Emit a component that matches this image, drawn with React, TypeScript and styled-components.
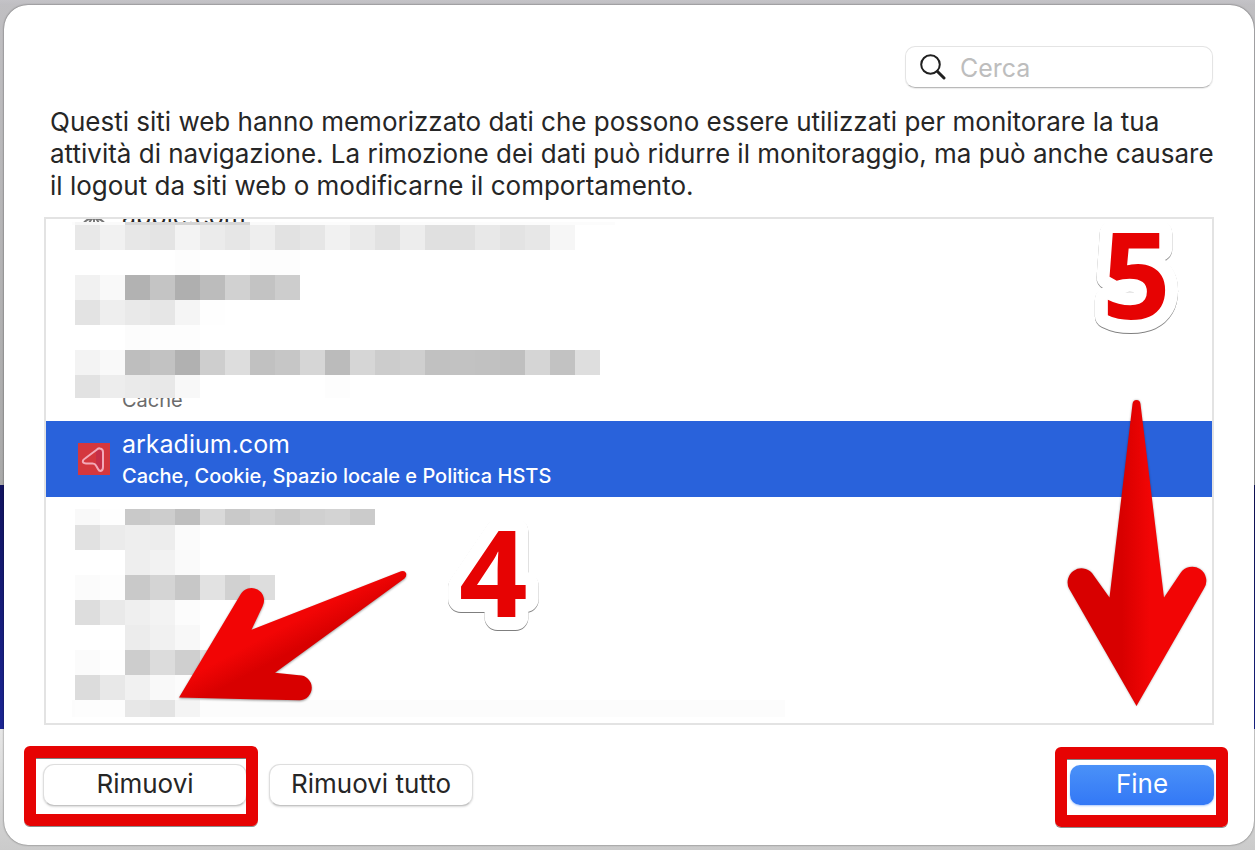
import React from "react";
import styled, { createGlobalStyle, css } from "styled-components";

const GlobalStyle = createGlobalStyle`
  *, *::before, *::after { box-sizing: border-box; }
  body {
    margin: 0;
    font-family: Inter, "Liberation Sans", sans-serif;
    color: #262626;
  }
`;

const Desktop = styled.div`
  display: flex;
  min-height: 100vh;
  padding: 5px 1px 5px 4px;
  background:
    linear-gradient(#c4c3c7, #bfbec2) top / 100% 5px no-repeat,
    linear-gradient(#c0bfc2 0, #a9a9a9 485px, #11135f 485px, #1b2593 729px, #e6e6e6 729px, #cbcbcb 100%);
`;

const Dialog = styled.main`
  flex: 1;
  min-width: 0;
  display: flex;
  flex-direction: column;
  padding: 41px 40px 39px;
  background: #fff;
  border-radius: 24px;
  box-shadow: 0 0 2px rgba(0, 0, 0, 0.6);
`;

const SearchField = styled.label`
  align-self: flex-end;
  display: flex;
  align-items: center;
  gap: 14px;
  width: 308px;
  height: 42px;
  margin-right: 1px;
  padding: 0 14px;
  border: 1px solid #e4e4e4;
  border-bottom-color: #b9b9b9;
  border-radius: 10px;
  box-shadow: 0 1px 1px rgba(0, 0, 0, 0.08);
`;

const SearchInput = styled.input`
  flex: 1;
  min-width: 0;
  padding: 2px 0 0;
  border: 0;
  outline: 0;
  background: transparent;
  font: inherit;
  font-size: 25px;
  &::placeholder { color: #bdbdbd; opacity: 1; }
`;

const Description = styled.p`
  margin: 18px -6px 15px 6px;
  font-size: 26px;
  line-height: 32px;
`;

const ListFrame = styled.section`
  position: relative;
  flex: 1 0 508px;
  display: flex;
  border: 2px solid #e3e3e3;
`;

const ListViewport = styled.div`
  flex: 1;
  min-width: 0;
  height: 504px;
  overflow: hidden;
`;

const SiteList = styled.ul`
  list-style: none;
  margin: -26px 0 0;
  padding: 0;
`;

const SiteRow = styled.li<{ $selected?: boolean }>`
  display: flex;
  align-items: center;
  gap: 12px;
  height: 76px;
  padding: 0 32px;
  color: ${(p) => (p.$selected ? "#fff" : "#262626")};
  background: ${(p) => (p.$selected ? "#2962db" : "transparent")};
`;

const SiteIcon = styled.svg`
  width: 32px;
  height: 32px;
  flex: none;
`;

const SiteText = styled.div`
  display: flex;
  flex-direction: column;
  padding-top: 2px;
`;

const SiteName = styled.span`
  min-height: 32px;
  font-size: 25px;
  line-height: 32px;
`;

const SiteDetail = styled.span<{ $selected?: boolean }>`
  min-height: 32px;
  font-size: 20px;
  line-height: 32px;
  font-weight: ${(p) => (p.$selected ? 500 : 400)};
  color: ${(p) => (p.$selected ? "#fff" : "#6c6c6c")};
`;

const Redaction = styled.div<{ $top: number; $width: number }>`
  position: absolute;
  left: 26px;
  top: ${(p) => p.$top}px;
  width: ${(p) => p.$width}px;
  background: #fff;
`;

const Strip = styled.div<{ $height: number; $shade?: string }>`
  display: flex;
  height: ${(p) => p.$height}px;
  padding-left: 3px;
  background: ${(p) => p.$shade ?? "#fff"};
`;

const Tile = styled.span<{ $shade: string }>`
  width: 25px;
  flex: none;
  background: ${(p) => `#${p.$shade}${p.$shade}${p.$shade}`};
`;

const Footer = styled.footer`
  display: flex;
  align-items: center;
  gap: 22px;
  margin: 39px 0 0 -1px;
`;

const Marked = styled.div<{ $inset: string }>`
  position: relative;
  display: flex;
  &::after {
    content: "";
    position: absolute;
    inset: ${(p) => p.$inset};
    border: 12px solid #e60303;
    border-radius: 6px;
    box-shadow: 0 1px 0 rgba(0, 0, 0, 0.45), inset 0 1px 0 rgba(0, 0, 0, 0.5);
    pointer-events: none;
  }
`;

const Button = styled.button<{ $primary?: boolean }>`
  width: 204px;
  height: 42px;
  padding: 0 0 2px;
  border: 1px solid #dedede;
  border-bottom-color: #c4c4c4;
  border-radius: 11px;
  background: #fff;
  box-shadow: 0 1px 2px rgba(0, 0, 0, 0.15);
  color: #262626;
  font: inherit;
  font-size: 26px;
  line-height: 32px;
  ${(p) =>
    p.$primary &&
    css`
      width: 144px;
      height: 40px;
      border: 0;
      border-radius: 10px;
      background: linear-gradient(#4a91f8, #3378f6);
      box-shadow: 0 1px 2px rgba(51, 120, 246, 0.4);
      color: #fff;
    `}
`;

const Spacer = styled.div`
  flex: 1;
`;

const RemoveArrow = styled.svg`
  position: absolute;
  left: 129px;
  top: 346px;
  filter: drop-shadow(0 1px 1px rgba(0, 0, 0, 0.4));
`;

const DoneArrow = styled.svg`
  position: absolute;
  right: 0;
  top: 176px;
  filter: drop-shadow(0 0 1px rgba(0, 0, 0, 0.3));
`;

const StepNumber = styled.svg<{ $top: number; $left?: number; $right?: number }>`
  position: absolute;
  top: ${(p) => p.$top}px;
  left: ${(p) => (p.$left === undefined ? "auto" : `${p.$left}px`)};
  right: ${(p) => (p.$right === undefined ? "auto" : `${p.$right}px`)};
  filter: drop-shadow(0 1px 0 rgba(0, 0, 0, 0.5));
  text {
    font-family: "Open Sans", "Noto Sans", sans-serif;
    font-size: 120px;
    font-weight: 700;
    fill: #e60303;
    stroke: #fff;
    stroke-width: 26px;
    stroke-linejoin: round;
    paint-order: stroke;
  }
`;

type StripData = { height: number; tiles: string; shade?: string };

const upperStrips: StripData[] = [
  { height: 3, shade: "#fcfcfc", tiles: "f6 fa d8 d9 d4 d9 d6 fa" },
  { height: 25, tiles: "e8 f1 e7 e4 f3 eb e6 ee e2 e6 f1 ea e2 ed e0 e0 e8 e3 e7 f6" },
  { height: 25, tiles: "ff ff ff ff fd ff ff fd fd" },
  { height: 25, tiles: "f1 f9 b2 c4 af bc d1 c3 cd" },
  { height: 25, tiles: "e3 ee e9 e6 f5 fe" },
  { height: 25, tiles: "ff ff fc fd fd" },
  { height: 25, tiles: "f3 f9 be c2 b1 ce dd c1 c6 d6 bb d6 cc cf c1 c2 c1 bf d5 c2 de" },
  { height: 23, tiles: "e2 ed ea e8 f8 ff ff ff ff ff fd" },
];

const lowerStrips: StripData[] = [
  { height: 16, tiles: "f9 fe c9 cd bf d9 c9 d0 ca d0 d3 cb" },
  { height: 25, tiles: "e1 eb ee ed fb" },
  { height: 25, tiles: "ff ff ee f2 fa" },
  { height: 25, tiles: "fb fd c9 d4 c7 e2 d1 dd" },
  { height: 25, tiles: "dd e9 ef f3 fc" },
  { height: 25, tiles: "ff ff ec f1 f8" },
  { height: 25, tiles: "fb fe cd dc cf e0" },
  { height: 25, tiles: "dc e8 f1 f9 fc" },
  { height: 17, shade: "#fcfcfc", tiles: "fd fd e7 e3 f4" },
];

function Mosaic({ top, width, strips }: { top: number; width: number; strips: StripData[] }) {
  return (
    <Redaction $top={top} $width={width} aria-hidden="true">
      {strips.map((strip, i) => (
        <Strip key={i} $height={strip.height} $shade={strip.shade}>
          {strip.tiles.split(" ").map((shade, j) => (
            <Tile key={j} $shade={shade} />
          ))}
        </Strip>
      ))}
    </Redaction>
  );
}

function Step({ value, ...place }: { value: string; $top: number; $left?: number; $right?: number }) {
  return (
    <StepNumber width="110" height="180" {...place}>
      <text x="20" y="136">{value}</text>
    </StepNumber>
  );
}

export default function App() {
  return (
    <>
      <GlobalStyle />
      <Desktop>
        <Dialog>
          <SearchField>
            <svg width="26" height="26" viewBox="0 0 26 26" fill="none" stroke="#202020" aria-hidden="true">
              <circle cx="10.5" cy="10.5" r="9.3" strokeWidth="2" />
              <path d="M17.5 17.5 24 24" strokeWidth="3" strokeLinecap="round" />
            </svg>
            <SearchInput type="search" placeholder="Cerca" aria-label="Cerca" />
          </SearchField>

          <Description>
            Questi siti web hanno memorizzato dati che possono essere utilizzati per monitorare la tua
            attività di navigazione. La rimozione dei dati può ridurre il monitoraggio, ma può anche causare
            il logout da siti web o modificarne il comportamento.
          </Description>

          <ListFrame>
            <ListViewport>
              <SiteList>
                <SiteRow>
                  <SiteIcon viewBox="0 0 32 32" fill="none" stroke="#777" strokeWidth="2">
                    <circle cx="16" cy="16" r="13" />
                    <ellipse cx="16" cy="16" rx="6" ry="13" />
                    <path d="M16 3v26M3 16h26M6 8h20M6 24h20" />
                  </SiteIcon>
                  <SiteText>
                    <SiteName>apple.com</SiteName>
                    <SiteDetail />
                  </SiteText>
                </SiteRow>
                <SiteRow />
                <SiteRow>
                  <SiteIcon />
                  <SiteText>
                    <SiteName />
                    <SiteDetail>Cache</SiteDetail>
                  </SiteText>
                </SiteRow>
                <SiteRow $selected>
                  <SiteIcon viewBox="0 0 32 32">
                    <path fill="#d4373e" d="M0 0h32v32H0z" />
                    <path fill="#c52f48" d="M18 7h6v19h-3l-3-5z" />
                    <path
                      d="M19 6.5Q20 5 22 5.500Q25 6 25 9V24Q25 27.500 22.500 28Q21 28 20 26L18 22.500Q17 20.500 14.500 20.500H8Q4 20 5 17.500Q5.500 16.500 7 15.500Z"
                      fill="none"
                      stroke="#f3a9b8"
                      strokeWidth="2"
                      strokeLinejoin="round"
                    />
                  </SiteIcon>
                  <SiteText>
                    <SiteName>arkadium.com</SiteName>
                    <SiteDetail $selected>Cache, Cookie, Spazio locale e Politica HSTS</SiteDetail>
                  </SiteText>
                </SiteRow>
              </SiteList>
            </ListViewport>

            <Mosaic top={3} width={543} strips={upperStrips} />
            <Mosaic top={290} width={713} strips={lowerStrips} />

            <RemoveArrow width="240" height="140" viewBox="175 565 240 140" aria-hidden="true">
              <defs>
                <linearGradient id="removeShade" gradientUnits="userSpaceOnUse" x1="262" y1="638" x2="274" y2="661">
                  <stop offset="0" stopColor="#f20505" />
                  <stop offset="1" stopColor="#d80000" />
                </linearGradient>
              </defs>
              <path
                fill="url(#removeShade)"
                d="M401 571.300Q404.500 570 406 573Q407 576 404.500 578.500L275 672.700L299 675.300A12.500 12.500 0 0 1 299.500 700.300L179 697.500L240.500 594.500A12.500 12.500 0 0 1 262.500 606.500L251.500 629.700Z"
              />
            </RemoveArrow>
            <DoneArrow width="152" height="315" viewBox="1060 395 152 315" aria-hidden="true">
              <defs>
                <linearGradient id="doneShade" gradientUnits="userSpaceOnUse" x1="1122" y1="0" x2="1150" y2="0">
                  <stop offset="0" stopColor="#d80000" />
                  <stop offset="1" stopColor="#f20505" />
                </linearGradient>
              </defs>
              <path
                fill="url(#doneShade)"
                d="M1132.500 404Q1133 400 1136.500 400Q1140 400 1140.500 404L1164 597.500L1180.500 573A14 14 0 0 1 1204 588.500L1136.500 706L1069 588.500A14 14 0 0 1 1092 573L1109.500 597.500Z"
              />
            </DoneArrow>
            <Step value="4" $top={262} $left={393} />
            <Step value="5" $top={-36} $right={20} />
          </ListFrame>

          <Footer>
            <Marked $inset="-18px -11px -20px -19px">
              <Button type="button">Rimuovi</Button>
            </Marked>
            <Button type="button">Rimuovi tutto</Button>
            <Spacer />
            <Marked $inset="-18px -14px -22px -15px">
              <Button type="button" $primary>Fine</Button>
            </Marked>
          </Footer>
        </Dialog>
      </Desktop>
    </>
  );
}
